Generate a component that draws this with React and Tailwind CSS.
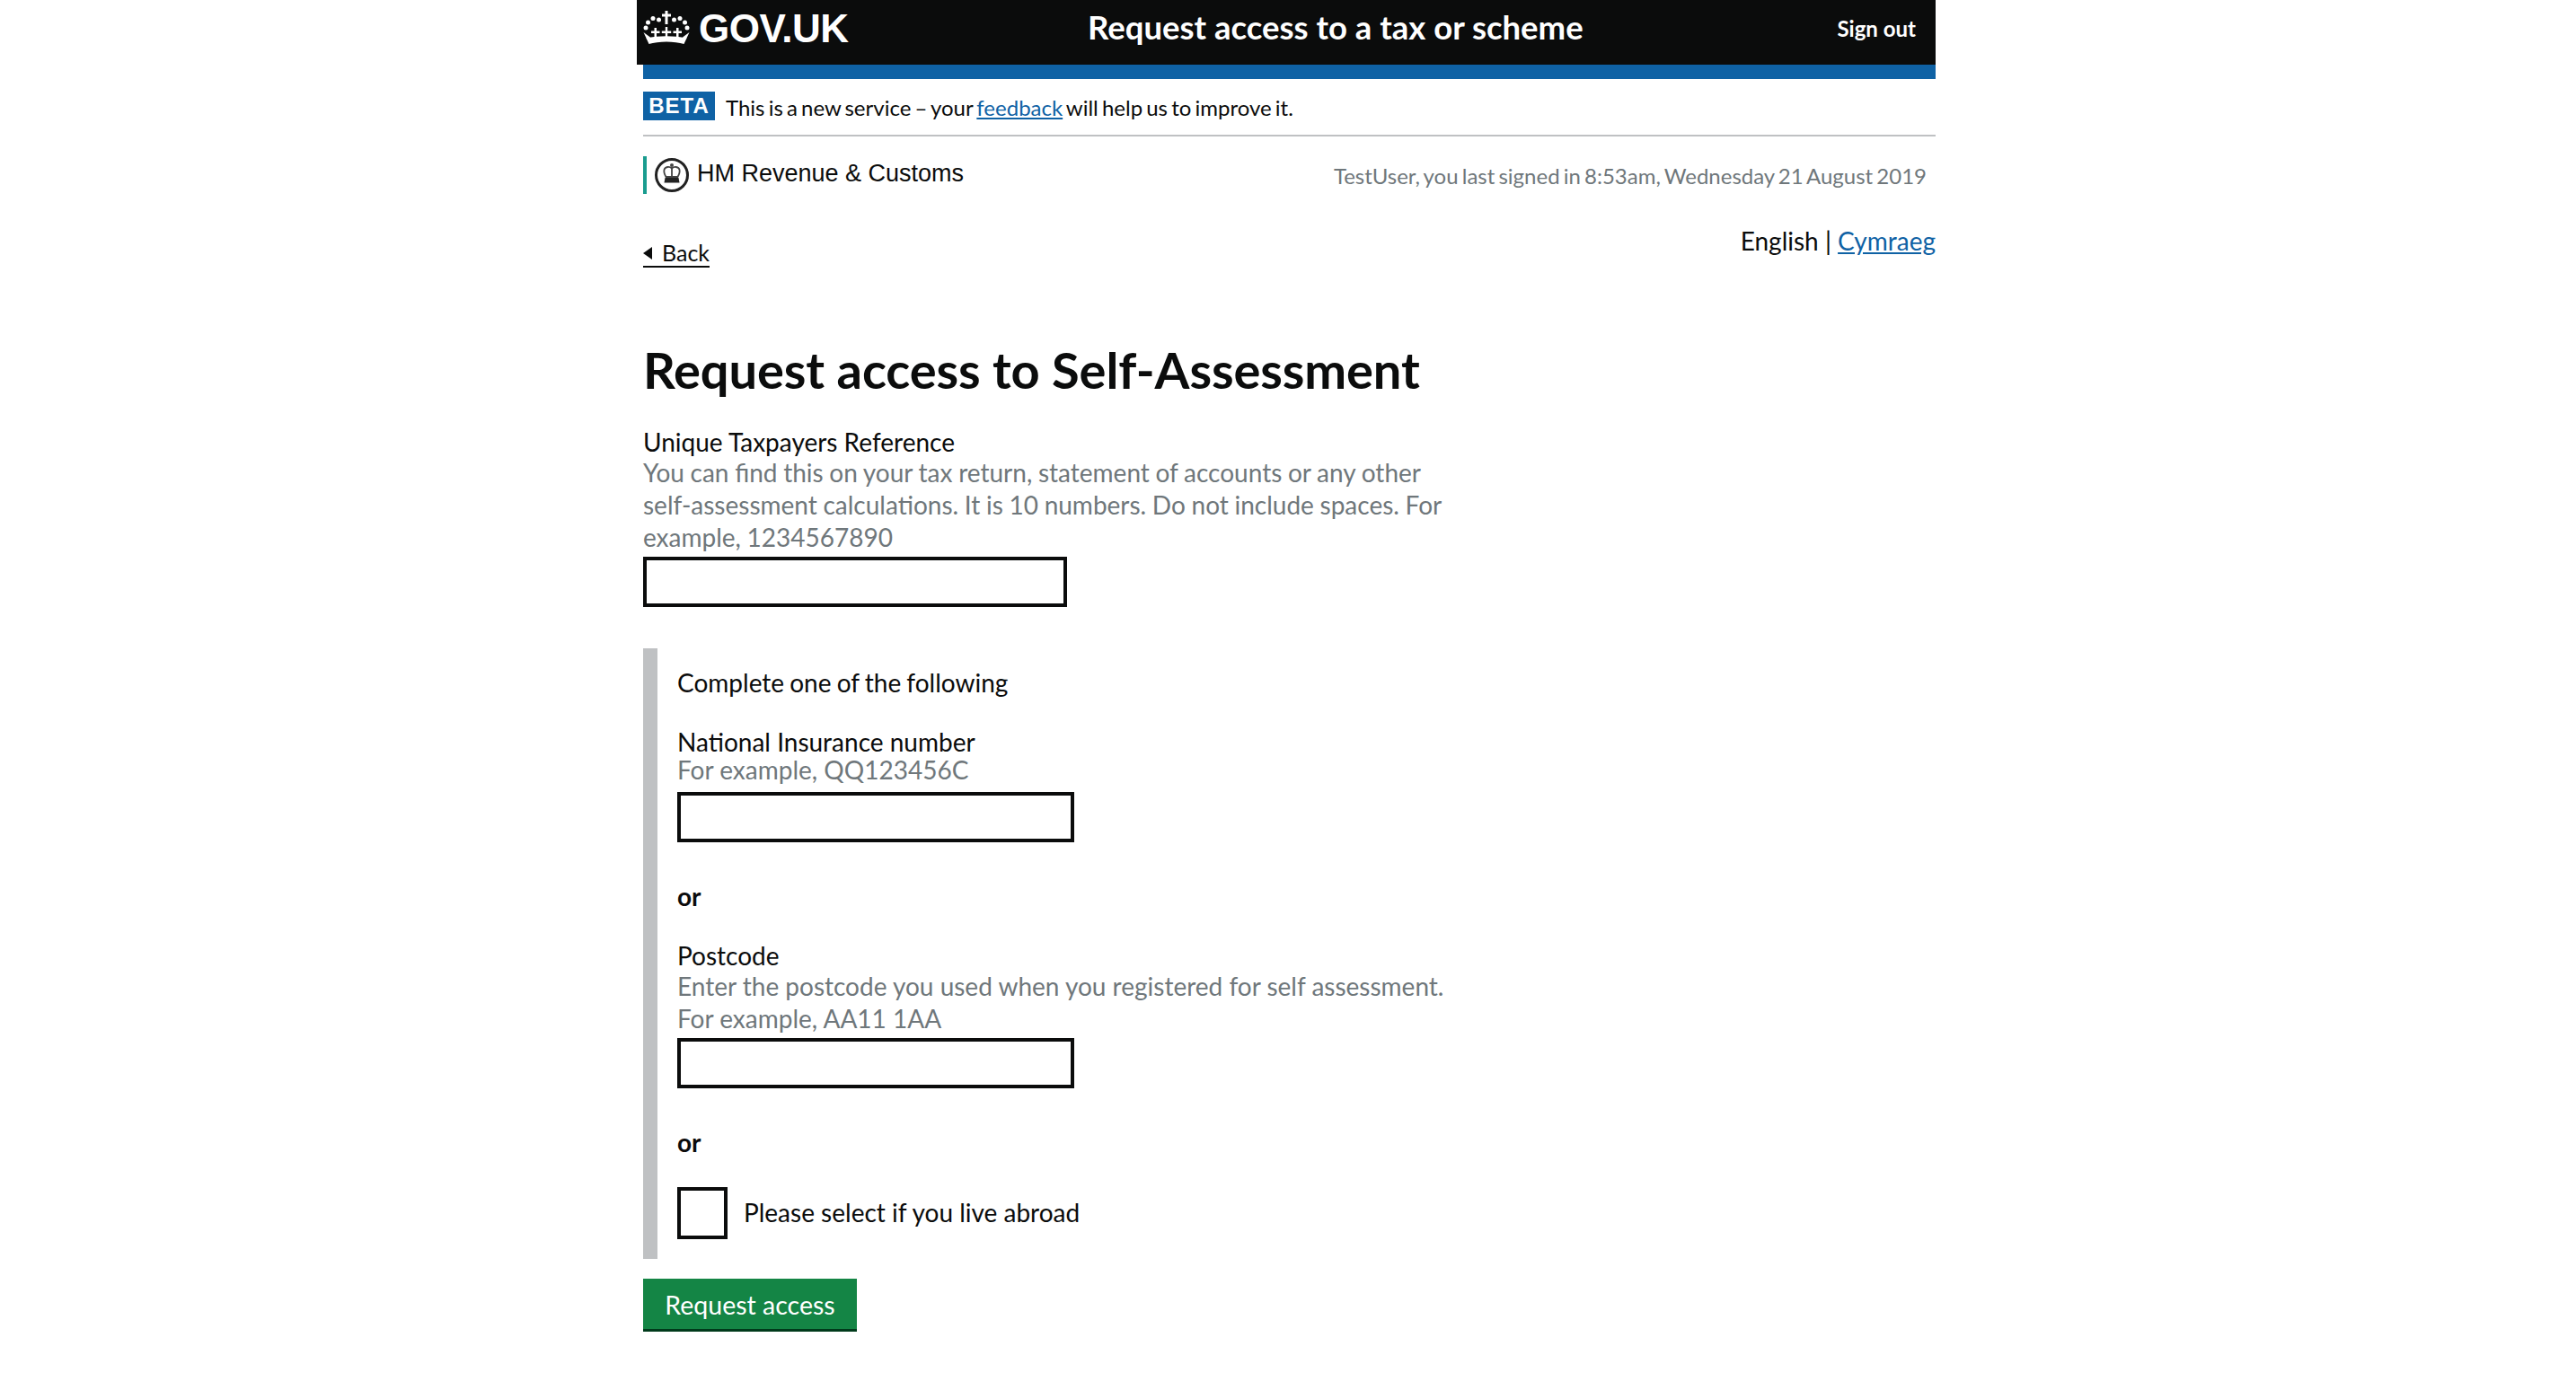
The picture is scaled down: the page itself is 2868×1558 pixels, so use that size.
function GovCrown() {
  return (
    <svg width="60" height="50" viewBox="0 0 60 50" fill="#fff" className="-mt-[12px] shrink-0">
      <path d="M25.500 7h3v3.500H32v3h-3.500V22h-3v-8.500H22v-3h3.500z" />
      <circle cx="4" cy="26" r="2.500" />
      <circle cx="6.500" cy="20" r="2.500" />
      <circle cx="12" cy="15.500" r="2.500" />
      <circle cx="18.500" cy="17" r="2.500" />
      <circle cx="35.500" cy="17" r="2.500" />
      <circle cx="42" cy="15.500" r="2.500" />
      <circle cx="47.500" cy="20" r="2.500" />
      <circle cx="50" cy="26" r="2.500" />
      <path d="M7.500 44C18 40.500 36 40.500 46.500 44l3-6.500C36 34.500 18 34.500 4.500 37.500z" />
      <path d="M1.500 31l7.500 5.500-1.500 1.500-2.500.500zM52.500 31L45 36.500l1.500 1.500 2.500.500z" />
      <path d="M13.500 26h2.500v3.500h3.500V32H16v5h-2.500v-5H10v-2.500h3.500z" />
      <path d="M25.800 25h2.400v4.500h4V32h-4v5h-2.400v-5h-4v-2.500h4z" />
      <path d="M38 26h2.500v3.500H44V32h-3.500v5H38v-5h-3.500v-2.500H38z" />
    </svg>
  );
}

function HmrcCrest() {
  return (
    <svg width="40" height="40" viewBox="0 0 40 40" className="shrink-0">
      <circle cx="20" cy="20" r="17.500" fill="#fff" stroke="#222" strokeWidth="3" />
      <circle cx="20" cy="9" r="2" fill="#444" />
      <path d="M20 12.500c-2.500-2.500-7.500-2-8.500 1.500-.6 2.500.5 5.500 2 8h13c1.500-2.500 2.600-5.500 2-8-1-3.500-6-4-8.500-1.500z" fill="none" stroke="#444" strokeWidth="1.800" />
      <path d="M20 12.500V22" stroke="#444" strokeWidth="1.800" />
      <path d="M12.500 23h15l1 5.500h-17z" fill="#222" />
    </svg>
  );
}

function TextBox({ w }) {
  return <input type="text" aria-label="text" className={w + " block h-[56px] border-[4px] border-[#0b0c0c] bg-white"} />;
}

export default function App() {
  return (
    <div className="min-h-[1558px] bg-white font-['Lato',sans-serif] text-[#0b0c0c]">
      <div className="ml-[716px] w-[1439px]">
        <header className="-ml-[7px] flex h-[72px] items-center bg-[#0b0c0c] text-white">
          <div className="ml-[6px] flex w-[496px] items-center gap-[3px]">
            <GovCrown />
            <span className="-mt-[9px] font-['Liberation_Sans',sans-serif] text-[44px] font-bold leading-none tracking-[-0.5px]">GOV.UK</span>
          </div>
          <span className="-mt-[11px] text-[36.500px] font-bold leading-none">Request access to a tax or scheme</span>
          <span className="-mt-[9px] ml-auto mr-[22px] text-[24px] font-bold leading-none">Sign out</span>
        </header>
        <div className="h-[16px] bg-[#0f62a5]" />
        <div className="flex h-[62px] items-start">
          <span className="mt-[14px] flex h-[32px] w-[80px] items-center justify-center bg-[#0f62a5] font-['Liberation_Sans',sans-serif] text-[24px] font-bold tracking-[1px] text-white">BETA</span>
          <p className="ml-[12px] mt-[14px] text-[24px] leading-[36px] [word-spacing:-2px]">
            This is a new service – your <a href="#" className="text-[#0f62a5] underline">feedback</a> will help us to improve it.
          </p>
        </div>
        <div className="h-[2px] bg-[#bfc1c3]" />
        <div className="mt-[22px] flex h-[42px] items-start justify-between">
          <div className="flex h-[42px] items-center border-l-[4px] border-[#1a9c8f] pl-[8px]">
            <HmrcCrest />
            <span className="-mt-[4px] ml-[8px] font-['Liberation_Sans',sans-serif] text-[27px] leading-none">HM Revenue &amp; Customs</span>
          </div>
          <span className="mr-[10px] mt-[4px] text-[24px] leading-[36px] text-[#6f777b] [word-spacing:-2px]">TestUser, you last signed in 8:53am, Wednesday 21 August 2019</span>
        </div>
        <div className="mt-[34px] flex h-[48px] items-start justify-between">
          <a href="#" className="mt-[14px] flex h-[34px] items-center gap-[11px] border-b-[2px] border-[#0b0c0c] pt-[3px] text-[25px]">
            <span className="h-0 w-0 border-y-[7px] border-r-[10px] border-y-transparent border-r-[#0b0c0c]" />
            <span>Back</span>
          </a>
          <p className="text-[28px] leading-[36px]">
            English | <a href="#" className="text-[#0f62a5] underline">Cymraeg</a>
          </p>
        </div>
        <h1 className="mt-[84px] h-[61px] text-[56px] font-bold leading-[60px] tracking-[-0.1px]">Request access to Self-Assessment</h1>
        <p className="mt-[33px] text-[28px] leading-[32px]">Unique Taxpayers Reference</p>
        <p className="w-[905px] text-[28px] leading-[36px] text-[#6f777b] [word-spacing:-0.5px]">You can find this on your tax return, statement of accounts or any other self-assessment calculations. It is 10 numbers. Do not include spaces. For example, 1234567890</p>
        <div className="mt-[4px]"><TextBox w="w-[472px]" /></div>
        <section className="mt-[46px] border-l-[16px] border-[#bfc1c3] pb-[22px] pl-[22px] pt-[20px]">
          <p className="text-[28px] leading-[36px] [word-spacing:-1px]">Complete one of the following</p>
          <p className="mt-[34px] text-[28px] leading-[28px]">National Insurance number</p>
          <p className="text-[28px] leading-[34px] text-[#6f777b]">For example, QQ123456C</p>
          <div className="mt-[8px]"><TextBox w="w-[442px]" /></div>
          <p className="mt-[42px] text-[28px] font-bold leading-[36px]">or</p>
          <p className="mt-[32px] text-[28px] leading-[32px]">Postcode</p>
          <p className="text-[28px] leading-[36px] text-[#6f777b]">Enter the postcode you used when you registered for self assessment.<br />For example, AA11 1AA</p>
          <div className="mt-[4px]"><TextBox w="w-[442px]" /></div>
          <p className="mt-[42px] text-[28px] font-bold leading-[36px]">or</p>
          <div className="mt-[32px] flex h-[58px] items-center gap-[18px]">
            <input type="checkbox" aria-label="abroad" className="h-[58px] w-[56px] appearance-none border-[4px] border-[#0b0c0c] bg-white" />
            <span className="-mt-[2px] text-[28px] leading-[36px]">Please select if you live abroad</span>
          </div>
        </section>
        <button className="mt-[22px] flex h-[59px] w-[238px] items-center justify-center border-b-[3px] border-[#003a1b] bg-[#148545] pt-[3px] text-[28.500px] text-white">Request access</button>
      </div>
    </div>
  );
}
